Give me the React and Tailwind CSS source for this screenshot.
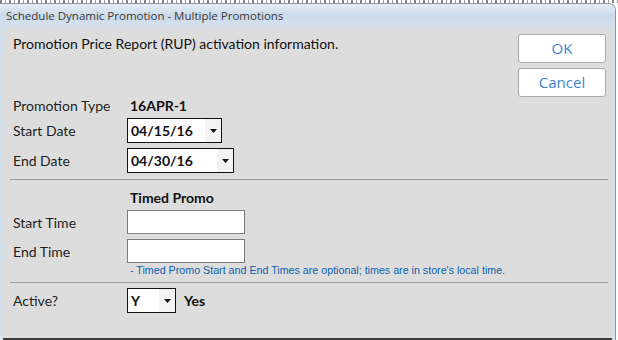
import { useState } from "react";

const labelFont = { fontFamily: "Lato, 'Open Sans', sans-serif" };

const Arrow = () => (
  <svg width="7" height="4" viewBox="0 0 7 4" className="block">
    <path d="M0 0h7L3.5 4z" fill="#111" />
  </svg>
);

const DropDown = ({ value, width, padWidth }) => (
  <div
    className="flex h-[25px] items-stretch border border-[#111] bg-white"
    style={{ width }}
  >
    <span className="flex flex-1 items-center pl-[3px] text-[14px] font-bold text-[#111]">
      {value}
    </span>
    <span
      className="flex items-center justify-center bg-[#f3f3f3]"
      style={{ width: padWidth }}
    >
      <Arrow />
    </span>
  </div>
);

const Row = ({ label, className = "", children }) => (
  <div className={`flex items-center ${className}`}>
    <span className="w-[114px] text-[14px] text-[#1e1e1e]">{label}</span>
    {children}
  </div>
);

const Divider = ({ className = "" }) => (
  <div className={`ml-[7px] mr-[4px] h-px bg-[#9c9c9c] ${className}`} />
);

export default function App() {
  const [active] = useState("Y");

  return (
    <div className="flex h-[340px] w-[618px] flex-col overflow-hidden bg-white" style={labelFont}>
      {/* edge of the page behind the dialog */}
      <div className="h-[3px] bg-[repeating-linear-gradient(90deg,#333_0_2px,#fff_2px_5px,#555_5px_6px,#fff_6px_9px)] opacity-60" />

      <div className="mr-[2px] flex flex-1 flex-col overflow-hidden rounded-tr-[7px] border-r border-t border-[#8a96a4] bg-[#d3dfeb]">
        <div
          className="flex h-[24px] items-center bg-gradient-to-b from-[#e4ecf4] via-[#cbdaea] to-[#d7e2ee] px-[6px] text-[11.5px] text-[#3a3a3a]"
          style={{ fontFamily: "'Open Sans', 'Noto Sans', sans-serif" }}
        >
          Schedule Dynamic Promotion - Multiple Promotions
        </div>

        <div className="mx-[3px] flex flex-1 flex-col border-b-2 border-[#3c3c3c] bg-[#dddddd] pt-[6px]">
          <div className="flex">
            <div className="flex flex-1 flex-col pl-[10px]">
              <div className="h-[20px] text-[14px] leading-[20px] text-[#111]">
                Promotion Price Report (RUP) activation information.
              </div>
              <Row label="Promotion Type" className="mt-[41px] h-[20px]">
                <span className="pl-[3px] text-[14px] font-bold text-[#111]">16APR-1</span>
              </Row>
              <Row label="Start Date" className="mt-[3px]">
                <DropDown value="04/15/16" width={95} padWidth={16} />
              </Row>
              <Row label="End Date" className="mt-[5px]">
                <DropDown value="04/30/16" width={107} padWidth={16} />
              </Row>
            </div>
            <div className="flex flex-col gap-[5px] pr-[6px]">
              {["OK", "Cancel"].map((t) => (
                <button
                  key={t}
                  className="h-[29px] w-[88px] rounded-[3px] border border-[#a9a9a9] bg-white text-[15px] text-[#3d84d2]"
                  style={{ fontFamily: "'Open Sans', 'Noto Sans', sans-serif" }}
                >
                  {t}
                </button>
              ))}
            </div>
          </div>

          <Divider className="mt-[6px]" />

          <div className="flex flex-col pl-[10px]">
            <Row label="" className="mt-[7px] h-[20px]">
              <span className="pl-[3px] text-[14px] font-bold text-[#111]">Timed Promo</span>
            </Row>
            <Row label="Start Time" className="mt-[3px]">
              <div className="h-[24px] w-[118px] border border-[#7c7c7c] bg-white" />
            </Row>
            <Row label="End Time" className="mt-[5px]">
              <div className="h-[24px] w-[118px] border border-[#7c7c7c] bg-white" />
            </Row>
            <div
              className="ml-[117px] mt-[1px] h-[12px] text-[10.7px] leading-[12px] text-[#0d5fb0]"
              style={{ fontFamily: "'Liberation Sans', Arial, sans-serif" }}
            >
              - Timed Promo Start and End Times are optional; times are in store's local time.
            </div>
          </div>

          <Divider className="mt-[6px]" />

          <div className="flex flex-col pl-[10px]">
            <Row label="Active?" className="mt-[5px]">
              <DropDown value={active} width={49} padWidth={16} />
              <span className="ml-[8px] text-[14px] font-bold text-[#111]">Yes</span>
            </Row>
          </div>
        </div>
      </div>
    </div>
  );
}
